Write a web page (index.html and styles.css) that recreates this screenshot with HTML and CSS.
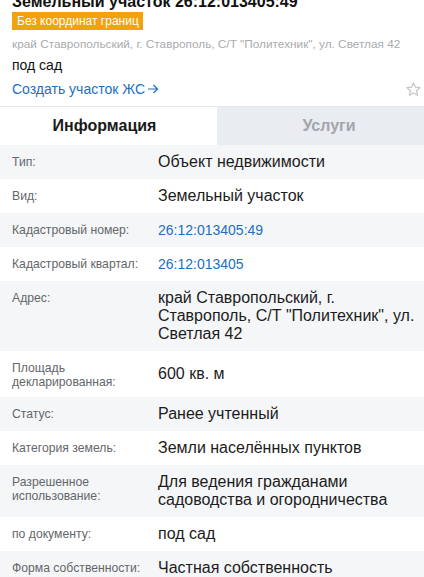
FILE: index.html
```html
<!DOCTYPE html>
<html lang="ru">
<head>
<meta charset="utf-8">
<link rel="stylesheet" href="styles.css">
</head>
<body>
<div class="page">
  <header class="head">
    <h1 class="title">Земельный участок 26:12:013405:49</h1>
    <div class="badge-line"><span class="badge">Без координат границ</span></div>
    <div class="addr">край Ставропольский, г. Ставрополь, С/Т "Политехник", ул. Светлая 42</div>
    <div class="use">под сад</div>
    <div class="link-row">
      <a class="create-link">Создать участок ЖС<svg class="arrow" viewBox="0 0 12 10" width="12" height="10"><path d="M1 5h10M6.5 1l4 4-4 4" fill="none" stroke="#1c6fc2" stroke-width="1.2"/></svg></a>
      <svg class="star" viewBox="0 0 24 24" width="17" height="17"><path d="M12 2.8l2.75 5.9 6.45.75-4.8 4.4 1.3 6.35L12 17l-5.7 3.2 1.3-6.35-4.8-4.4 6.45-.75z" fill="none" stroke="#c4c6c9" stroke-width="1.8" stroke-linejoin="round"/></svg>
    </div>
  </header>
  <nav class="tabs">
    <div class="tab active">Информация</div>
    <div class="tab inactive">Услуги</div>
  </nav>
  <div class="rows">
    <div class="row alt"><div class="label">Тип:</div><div class="value">Объект недвижимости</div></div>
    <div class="row"><div class="label">Вид:</div><div class="value">Земельный участок</div></div>
    <div class="row alt"><div class="label">Кадастровый номер:</div><div class="value blue">26:12:013405:49</div></div>
    <div class="row"><div class="label">Кадастровый квартал:</div><div class="value blue">26:12:013405</div></div>
    <div class="row alt"><div class="label">Адрес:</div><div class="value">край Ставропольский, г. Ставрополь, С/Т "Политехник", ул. Светлая 42</div></div>
    <div class="row"><div class="label">Площадь декларированная:</div><div class="value">600 кв. м</div></div>
    <div class="row alt"><div class="label">Статус:</div><div class="value">Ранее учтенный</div></div>
    <div class="row"><div class="label">Категория земель:</div><div class="value">Земли населённых пунктов</div></div>
    <div class="row alt"><div class="label">Разрешенное использование:</div><div class="value">Для ведения гражданами садоводства и огородничества</div></div>
    <div class="row"><div class="label">по документу:</div><div class="value">под сад</div></div>
    <div class="row alt"><div class="label">Форма собственности:</div><div class="value">Частная собственность</div></div>
  </div>
</div>
</body>
</html>
```
FILE: styles.css
```css
html, body {
  margin: 0;
  padding: 0;
  background: #ffffff;
  overflow: hidden;
}
body {
  font-family: "Liberation Sans", Arial, sans-serif;
  color: #1a1a1a;
}
.page {
  width: 424px;
  margin-top: -8px;
}
.head {
  padding: 0 12px 8px 12px;
  border-bottom: 1px solid #e4e6e9;
}
.title {
  margin: 0;
  font-size: 16px;
  line-height: 20px;
  font-weight: bold;
  color: #111;
}
.badge-line {
  display: flex;
}
.badge {
  background: #f2a20c;
  color: #ffffff;
  font-size: 12px;
  line-height: 18px;
  padding: 0 4px 0 5px;
}
.addr {
  margin-top: 5px;
  font-size: 11.8px;
  line-height: 18px;
  color: #a9abae;
  white-space: nowrap;
}
.use {
  margin-top: 3px;
  font-size: 14px;
  line-height: 18px;
  color: #111;
}
.link-row {
  margin-top: 6px;
  display: flex;
  align-items: center;
  justify-content: space-between;
  height: 18px;
}
.create-link {
  display: flex;
  align-items: center;
  font-size: 14px;
  line-height: 18px;
  color: #1c6fc2;
}
.arrow {
  margin-left: 2px;
}
.star {
  margin-right: -10px;
}
.tabs {
  display: grid;
  grid-template-columns: 217px 1fr;
  height: 38px;
}
.tab {
  display: flex;
  align-items: center;
  justify-content: center;
  font-size: 16px;
  font-weight: bold;
}
.tab.active {
  background: #ffffff;
  color: #1a1a1a;
  padding-right: 8px;
}
.tab.inactive {
  background: #e9ecf0;
  color: #a2a6ab;
  padding-left: 17px;
}
.rows {
  display: flex;
  flex-direction: column;
}
.row {
  display: grid;
  grid-template-columns: 146px 1fr;
  padding: 8px 4px 8px 12px;
  min-height: 18px;
  background: #ffffff;
}
.row.alt {
  background: #f5f6f8;
}
.label {
  font-size: 12.2px;
  line-height: 14px;
  color: #63676b;
  align-self: start;
  padding-top: 2px;
}
.value {
  font-size: 16px;
  line-height: 18px;
  color: #1c1c1c;
  align-self: center;
}
.value.blue {
  font-size: 14px;
  color: #1c6fc2;
}
```
